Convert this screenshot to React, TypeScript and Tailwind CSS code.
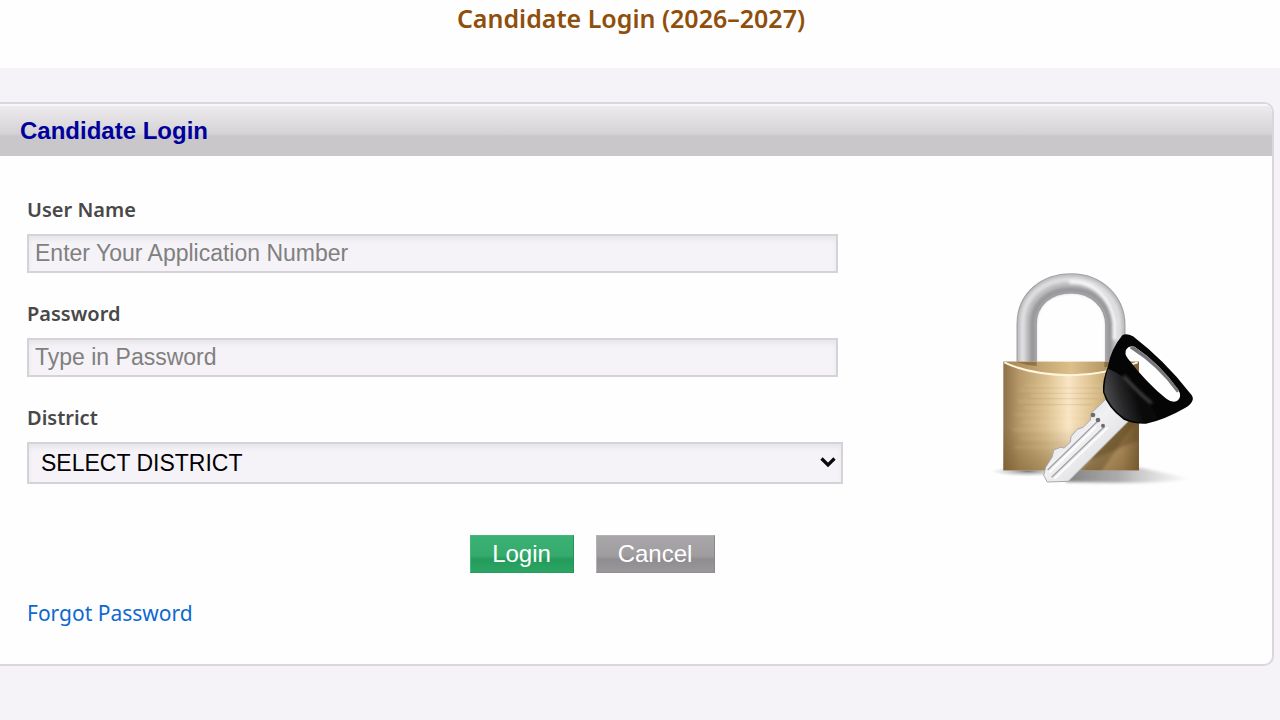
import type { ReactNode } from "react";

function Field({ id, label, children }: { id: string; label: string; children: ReactNode }) {
  return (
    <div className="flex flex-col gap-[10px]">
      <label htmlFor={id} className="font-['Noto_Sans',sans-serif] text-[20px] leading-7 font-semibold text-[#484848]">
        {label}
      </label>
      {children}
    </div>
  );
}

function LockAndKey() {
  return (
    <svg viewBox="0 0 690 720" className="h-[240px] w-[230px]" role="img" aria-label="Padlock and key">
      <defs>
        <linearGradient id="body" x1="0" x2="1" y1="0" y2="0">
          <stop offset="0" stopColor="#8d7148" />
          <stop offset="0.12" stopColor="#b89a6a" />
          <stop offset="0.32" stopColor="#dcc190" />
          <stop offset="0.48" stopColor="#f9e5c3" />
          <stop offset="0.66" stopColor="#dcc08e" />
          <stop offset="0.88" stopColor="#b09262" />
          <stop offset="1" stopColor="#7d623a" />
        </linearGradient>
        <linearGradient id="bodyShade" x1="0" x2="0" y1="0" y2="1">
          <stop offset="0.6" stopColor="#6b4d20" stopOpacity="0" />
          <stop offset="1" stopColor="#6b4d20" stopOpacity="0.45" />
        </linearGradient>
        <linearGradient id="top" x1="0" x2="1" y1="0" y2="0">
          <stop offset="0" stopColor="#a58452" />
          <stop offset="0.5" stopColor="#dcbf89" />
          <stop offset="1" stopColor="#8e6f40" />
        </linearGradient>
        <linearGradient id="blade" x1="0" x2="1" y1="0" y2="1">
          <stop offset="0" stopColor="#cdcdd1" />
          <stop offset="0.45" stopColor="#f1f1f3" />
          <stop offset="1" stopColor="#cfcfd3" />
        </linearGradient>
        <linearGradient id="grip" x1="0.05" x2="0.6" y1="0.6" y2="0.45">
          <stop offset="0" stopColor="#4c4c4f" />
          <stop offset="0.45" stopColor="#2a2a2c" />
          <stop offset="1" stopColor="#0a0a0a" />
        </linearGradient>
        <linearGradient id="cast" x1="0" x2="1" y1="0" y2="0">
          <stop offset="0" stopColor="#555" stopOpacity="0.75" />
          <stop offset="0.45" stopColor="#777" stopOpacity="0.6" />
          <stop offset="1" stopColor="#bbb" stopOpacity="0.1" />
        </linearGradient>
        <radialGradient id="shadow">
          <stop offset="0" stopColor="#444" stopOpacity="0.7" />
          <stop offset="0.5" stopColor="#777" stopOpacity="0.35" />
          <stop offset="1" stopColor="#999" stopOpacity="0" />
        </radialGradient>
        <filter id="soft" x="-20%" y="-20%" width="140%" height="140%">
          <feGaussianBlur stdDeviation="5" />
        </filter>
        <clipPath id="bodyClip">
          <rect x="67" y="305" width="407" height="326" />
        </clipPath>
        <clipPath id="holeClip">
          <path d="M436 268Q428 280 441 296Q498 370 556 416Q578 432 591 421Q603 408 592 389Q535 310 462 261Q446 254 436 268Z" />
        </clipPath>
      </defs>
      <path d="M250 624H480Q560 640 620 655Q570 670 400 668L256 666Z" fill="url(#cast)" filter="url(#soft)" />
      <ellipse cx="140" cy="634" rx="110" ry="16" fill="url(#shadow)" />
      <g fill="none">
        <path d="M137 315V193C137 116 197 70 271 70S403 124 403 196V315" stroke="#a0a0a3" strokeWidth="61" />
        <path d="M137 315V193C137 116 197 70 271 70S403 124 403 196V315" stroke="#bcbcbf" strokeWidth="54" />
        <path d="M155 315V193C155 131 203 89 271 89S385 135 385 196V315" stroke="#98989b" strokeWidth="18" filter="url(#soft)" />
        <path d="M125 315V193C125 107 190 58 271 58S414 116 414 196V315" stroke="#dfdfe1" strokeWidth="16" filter="url(#soft)" />
        <path d="M265 66C335 62 389 110 401 185V240" stroke="#fff" strokeWidth="10" filter="url(#soft)" />
      </g>
      <rect x="67" y="305" width="407" height="326" fill="url(#body)" />
      <rect x="67" y="305" width="407" height="326" fill="url(#bodyShade)" />
      <g stroke="#fff1d2" strokeOpacity="0.22" strokeWidth="4" filter="url(#soft)">
        <path d="M130 377H385M115 392H370M150 407H390M110 424H350M130 444H340M100 464H320M125 486H310M95 510H285M120 536H270M100 562H240" />
      </g>
      <path d="M130 384H370M120 400H350M140 416H350M130 434H330" stroke="#b08b52" strokeOpacity="0.2" strokeWidth="3" />
      <path d="M67 305H474Q400 343 271 345Q145 343 67 305Z" fill="url(#top)" />
      <path d="M70 307Q145 344 271 346Q370 344 470 307" fill="none" stroke="#fff5df" strokeWidth="6" />
      <path d="M107 306H167V318Q135 316 107 306ZM370 306H430V310Q404 320 370 322Z" fill="#6f5936" opacity="0.6" />
      <g clipPath="url(#bodyClip)">
        <path d="M480 460L350 650H280L440 480Z" fill="#4a3413" opacity="0.35" filter="url(#soft)" />
        <path d="M380 490L474 480V540L330 600Z" fill="#5a4018" opacity="0.4" filter="url(#soft)" />
      </g>
      <path
        d="M374 418L442 484L262 664L199 666L188 646L194 622L214 590L218 570L238 562L250 564L268 546L270 530L288 508L306 502L328 480L332 458Z"
        fill="url(#blade)"
        stroke="#a8a8ac"
        strokeWidth="3"
      />
      <path d="M200 630L350 484M212 652L370 500" stroke="#a2a2a6" strokeWidth="4" fill="none" />
      <path d="M205 637L346 499M221 656L380 503" stroke="#fff" strokeWidth="5" fill="none" />
      <circle cx="336" cy="465" r="7" fill="#6c6c6f" />
      <circle cx="351" cy="480" r="7" fill="#6c6c6f" />
      <circle cx="366" cy="497" r="6" fill="#6c6c6f" />
      <path
        fillRule="evenodd"
        d="M424 226Q436 219 456 229Q551 302 626 398Q638 410 635 420Q631 434 612 444Q550 480 495 491Q456 492 428 479Q379 444 366 397Q364 359 380 322Q390 266 424 226ZM436 268Q428 280 441 296Q498 370 556 416Q578 432 591 421Q603 408 592 389Q535 310 462 261Q446 254 436 268Z"
        fill="#050505"
      />
      <path d="M381 326Q371 357 370 396Q387 445 431 474Q460 488 495 487Q515 483 530 474Q512 430 462 380Q420 341 381 326Z" fill="url(#grip)" />
      <path d="M430 350Q470 396 510 428" fill="none" stroke="#4a4a4e" strokeWidth="8" strokeLinecap="round" filter="url(#soft)" />
      <g clipPath="url(#holeClip)">
        <path d="M452 256Q538 310 596 392" fill="none" stroke="#77777c" strokeWidth="20" />
      </g>
    </svg>
  );
}

const inputClass =
  "mr-[5px] h-[39px] border-2 border-[#d5d3d7] bg-[#f5f3f7] px-[6px] text-[23px] text-black shadow-[inset_0_4px_4px_#e8e6ea] placeholder:text-[#808080]";

export default function App() {
  return (
    <div className="min-h-screen bg-[#f5f3f7] font-['Liberation_Sans',Arial,sans-serif]">
      <header className="h-[68px] bg-[#fefefe] pr-[18px]">
        <h1 className="text-center font-['Noto_Sans',sans-serif] text-[25px] leading-9 font-semibold text-[#8f4e0b]">
          Candidate Login (2026–2027)
        </h1>
      </header>
      <main className="pt-[34px] pr-[6px]">
        <section className="overflow-hidden rounded-r-[10px] border-y-2 border-r-2 border-[#d9d7db] bg-[#fefefe]">
          <h2 className="border-t-2 border-[#f8f7f9] bg-[linear-gradient(#edebee_0%,#d4d2d5_56%,#c9c7ca_60%,#c9c7ca_100%)] pl-5 text-[24px] leading-[50px] font-bold text-[#00009c]">
            Candidate Login
          </h2>
          <div className="flex items-start pt-10 pb-9">
            <form className="flex-1 pl-[27px]" onSubmit={(e) => e.preventDefault()}>
              <div className="flex flex-col gap-[27px]">
                <Field id="user" label="User Name">
                  <input id="user" type="text" placeholder="Enter Your Application Number" className={inputClass} />
                </Field>
                <Field id="password" label="Password">
                  <input id="password" type="password" placeholder="Type in Password" className={inputClass} />
                </Field>
                <Field id="district" label="District">
                  <div className="relative">
                    <select
                      id="district"
                      className="h-[42px] w-full appearance-none border-2 border-[#d5d3d7] bg-[#f5f3f7] px-3 text-[23px] text-black shadow-[inset_0_4px_4px_#e8e6ea]"
                    >
                      <option>SELECT DISTRICT</option>
                    </select>
                    <svg viewBox="0 0 18 12" className="pointer-events-none absolute top-[14px] right-[6px] h-3 w-[18px]" aria-hidden="true">
                      <path d="M2.5 2.5L9 9L15.5 2.5" fill="none" stroke="#0a0a0a" strokeWidth="3.2" />
                    </svg>
                  </div>
                </Field>
              </div>
              <div className="mt-[51px] flex justify-center gap-[22px] pl-[314px]">
                <button
                  type="submit"
                  className="h-[38px] w-[104px] border border-t-[#45b878] border-r-[#259258] border-b-[#2a9a5e] border-l-[#45b878] bg-[linear-gradient(#3bb275_0%,#34ab6c_55%,#249b5b_65%,#2ba565_100%)] text-[24px] leading-none text-white"
                >
                  Login
                </button>
                <button
                  type="button"
                  className="h-[38px] w-[119px] border border-t-[#b4b2b5] border-r-[#8b898c] border-b-[#918f92] border-l-[#b4b2b5] bg-[linear-gradient(#a9a7aa_0%,#9f9da0_55%,#8f8d90_65%,#999799_100%)] text-[24px] leading-none text-white"
                >
                  Cancel
                </button>
              </div>
              <a href="#forgot" className="mt-[26px] inline-block font-['Noto_Sans',sans-serif] text-[21px] leading-7 text-[#0d69cf]">
                Forgot Password
              </a>
            </form>
            <aside className="flex w-[429px] justify-end pt-[64px] pr-[61px]">
              <LockAndKey />
            </aside>
          </div>
        </section>
      </main>
    </div>
  );
}
